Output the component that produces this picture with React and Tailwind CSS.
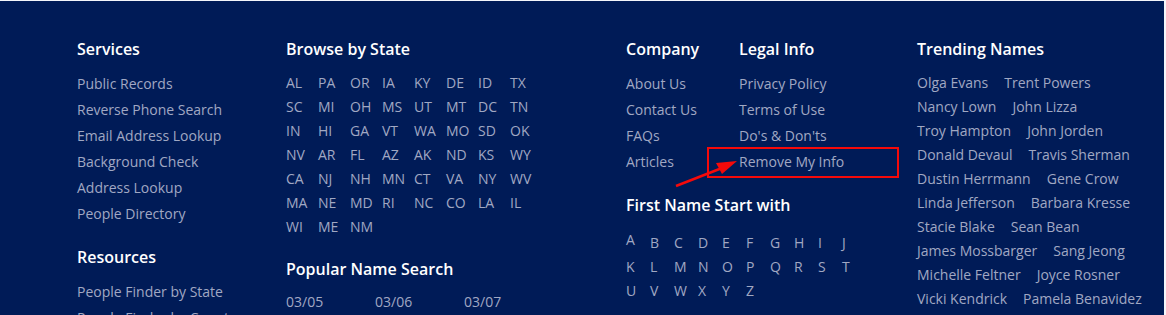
const services = ["Public Records", "Reverse Phone Search", "Email Address Lookup", "Background Check", "Address Lookup", "People Directory"];
const resources = ["People Finder by State", "People Finder by County"];
const states = [
  "AL", "PA", "OR", "IA", "KY", "DE", "ID", "TX",
  "SC", "MI", "OH", "MS", "UT", "MT", "DC", "TN",
  "IN", "HI", "GA", "VT", "WA", "MO", "SD", "OK",
  "NV", "AR", "FL", "AZ", "AK", "ND", "KS", "WY",
  "CA", "NJ", "NH", "MN", "CT", "VA", "NY", "WV",
  "MA", "NE", "MD", "RI", "NC", "CO", "LA", "IL",
  "WI", "ME", "NM",
];
const company = ["About Us", "Contact Us", "FAQs", "Articles"];
const legal = ["Privacy Policy", "Terms of Use", "Do's & Don'ts", "Remove My Info"];
const letters = "ABCDEFGHIJKLMNOPQRSTUVWXYZ".split("");
const trending = [
  ["Olga Evans", "Trent Powers"],
  ["Nancy Lown", "John Lizza"],
  ["Troy Hampton", "John Jorden"],
  ["Donald Devaul", "Travis Sherman"],
  ["Dustin Herrmann", "Gene Crow"],
  ["Linda Jefferson", "Barbara Kresse"],
  ["Stacie Blake", "Sean Bean"],
  ["James Mossbarger", "Sang Jeong"],
  ["Michelle Feltner", "Joyce Rosner"],
  ["Vicki Kendrick", "Pamela Benavidez"],
];

function Heading({ children, className = "" }) {
  return <h3 className={"text-[16px] leading-[24px] font-semibold text-white " + className}>{children}</h3>;
}

function LinkList({ items }) {
  return (
    <ul className="mt-[10px]">
      {items.map(item => (
        <li key={item} className="text-[14px] leading-[26px] text-[#a0a8c3]">
          <a href="#">{item}</a>
        </li>
      ))}
    </ul>
  );
}

export default function App() {
  return (
    <div className="relative h-[315px] overflow-hidden bg-[#001b57] border-t border-r-2 border-[#f4f6fa] font-['Open_Sans',sans-serif]">
      <div className="flex pl-[77px] pt-[36px]">
        {/* services + resources */}
        <div className="w-[209px] shrink-0">
          <Heading>Services</Heading>
          <LinkList items={services} />
          <Heading className="mt-[18px]">Resources</Heading>
          <LinkList items={resources} />
        </div>

        {/* states + popular names */}
        <div className="w-[340px] shrink-0">
          <Heading>Browse by State</Heading>
          <div className="mt-[10px] grid grid-cols-[repeat(8,32px)]">
            {states.map(s => (
              <a key={s} href="#" className="text-[14px] leading-[24px] text-[#a0a8c3]">{s}</a>
            ))}
          </div>
          <Heading className="mt-[18px]">Popular Name Search</Heading>
          <div className="mt-[9px] grid grid-cols-[repeat(3,89px)]">
            {["03/05", "03/06", "03/07"].map(d => (
              <a key={d} href="#" className="text-[14px] leading-[24px] text-[#a0a8c3]">{d}</a>
            ))}
          </div>
        </div>

        {/* company / legal / first names */}
        <div className="w-[291px] shrink-0">
          <div className="flex">
            <div className="w-[113px]">
              <Heading>Company</Heading>
              <LinkList items={company} />
            </div>
            <div>
              <Heading>Legal Info</Heading>
              <LinkList items={legal} />
            </div>
          </div>
          <Heading className="mt-[18px]">First Name Start with</Heading>
          <div className="mt-[14px] grid grid-cols-[repeat(10,24px)]">
            {letters.map(l => (
              <a
                key={l}
                href="#"
                className={"text-[14px] leading-[24px] text-[#a0a8c3] " + (l === "A" ? "-translate-y-[3px]" : "")}
              >
                {l}
              </a>
            ))}
          </div>
        </div>

        {/* trending */}
        <div className="flex-1">
          <Heading>Trending Names</Heading>
          <div className="mt-[10px]">
            {trending.map(pair => (
              <div key={pair[0]} className="flex gap-[16px] text-[14px] leading-[24px] text-[#a0a8c3]">
                <a href="#">{pair[0]}</a>
                <a href="#">{pair[1]}</a>
              </div>
            ))}
          </div>
        </div>
      </div>

      {/* annotation overlay */}
      <div className="absolute left-[707px] top-[146px] w-[192px] h-[31px] border-2 border-[#f50a0a]" />
      <svg className="absolute left-0 top-0" width="1166" height="315" viewBox="0 0 1166 315">
        <line x1="676" y1="185" x2="722" y2="167" stroke="#f50a0a" strokeWidth="2.5" />
        <polygon points="737,160 716,162 722,173" fill="#f50a0a" />
      </svg>
    </div>
  );
}
